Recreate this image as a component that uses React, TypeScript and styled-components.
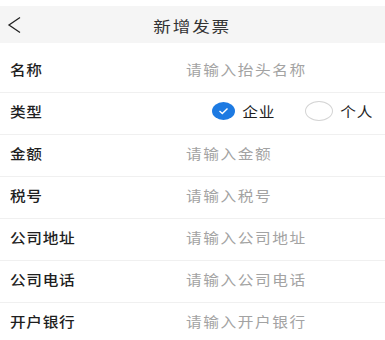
import React from 'react';
import { styled, createGlobalStyle } from 'styled-components';

const GlobalStyle = createGlobalStyle`
  html, body {
    margin: 0;
    padding: 0;
    background: #ffffff;
    font-family: "Noto Sans CJK SC", "Noto Sans", sans-serif;
  }
`;

const Page = styled.div`
  width: 385px;
  height: 340px;
  overflow: hidden;
  padding-top: 6px;
  box-sizing: border-box;
  background: #fff;
`;

const Header = styled.div`
  height: 37px;
  background: #f5f5f5;
  display: flex;
  align-items: center;
  justify-content: center;
  position: relative;
`;

const BackButton = styled.button`
  position: absolute;
  left: 4px;
  top: 50%;
  transform: translateY(-50%);
  border: 0;
  background: none;
  padding: 2px;
  display: flex;
`;

const Title = styled.div`
  font-size: 15px;
  letter-spacing: 1.6px;
  color: #333;
  transform: scaleX(1.17);
  margin-top: 1px;
`;

const Form = styled.div`
  margin-top: 8px;
`;

const Row = styled.div`
  height: 42px;
  box-sizing: border-box;
  border-bottom: 1px solid #f0f0f0;
  display: flex;
  align-items: center;
  padding: 0 10px 6px 10px;
`;

const Label = styled.div`
  width: 176px;
  font-size: 14px;
  letter-spacing: 0.6px;
  color: #1f1f1f;
  font-weight: 500;
  transform: scaleX(1.12);
  transform-origin: left center;
`;

const Placeholder = styled.div`
  font-size: 14px;
  letter-spacing: 1.4px;
  color: #a3a3a3;
  transform: scaleX(1.12);
  transform-origin: left center;
`;

const RadioGroup = styled.div`
  flex: 1;
  display: flex;
  align-items: center;
  justify-content: flex-end;
  gap: 32px;
  margin-right: 3px;
`;

const RadioOption = styled.div`
  display: flex;
  align-items: center;
  gap: 9px;
`;

const RadioMark = styled.div<{ $checked?: boolean }>`
  width: ${(p) => (p.$checked ? 23 : 28)}px;
  height: ${(p) => (p.$checked ? 18 : 20)}px;
  border-radius: 50%;
  box-sizing: border-box;
  background: ${(p) => (p.$checked ? '#1d7ae2' : '#fff')};
  border: ${(p) => (p.$checked ? 'none' : '1px solid #d4d4d4')};
  display: flex;
  align-items: center;
  justify-content: center;
`;

const RadioText = styled.div`
  font-size: 14px;
  letter-spacing: 0.8px;
  color: #1f1f1f;
  transform: scaleX(1.12);
`;

const fields = [
  { label: '名称', placeholder: '请输入抬头名称' },
  { label: '类型', radio: true },
  { label: '金额', placeholder: '请输入金额' },
  { label: '税号', placeholder: '请输入税号' },
  { label: '公司地址', placeholder: '请输入公司地址' },
  { label: '公司电话', placeholder: '请输入公司电话' },
  { label: '开户银行', placeholder: '请输入开户银行' },
];

const App: React.FC = () => {
  return (
    <Page>
      <GlobalStyle />
      <Header>
        <BackButton>
          <svg width="16" height="20" viewBox="0 0 16 20">
            <path d="M14 2.5 L3 10 L14 17.5" fill="none" stroke="#222" strokeWidth="1.3" />
          </svg>
        </BackButton>
        <Title>新增发票</Title>
      </Header>
      <Form>
        {fields.map((f) => (
          <Row key={f.label}>
            <Label>{f.label}</Label>
            {f.radio ? (
              <RadioGroup>
                <RadioOption>
                  <RadioMark $checked>
                    <svg width="11" height="8" viewBox="0 0 11 8">
                      <path d="M1.5 4 L4.3 6.5 L9.5 1.5" fill="none" stroke="#fff" strokeWidth="1.4" />
                    </svg>
                  </RadioMark>
                  <RadioText>企业</RadioText>
                </RadioOption>
                <RadioOption>
                  <RadioMark />
                  <RadioText>个人</RadioText>
                </RadioOption>
              </RadioGroup>
            ) : (
              <Placeholder>{f.placeholder}</Placeholder>
            )}
          </Row>
        ))}
      </Form>
    </Page>
  );
};

export default App;
